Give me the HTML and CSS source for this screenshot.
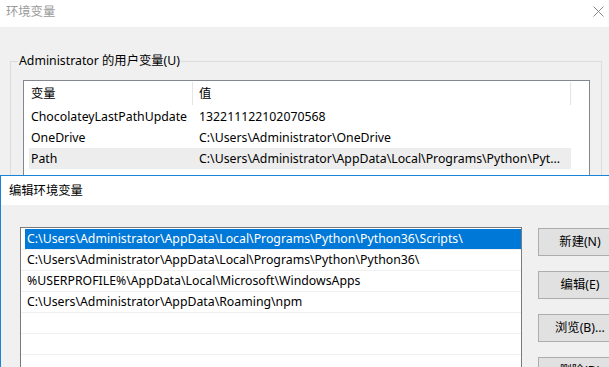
FILE: index.html
```html
<!DOCTYPE html>
<html lang="zh-CN">
<head>
<meta charset="utf-8">
<title>环境变量</title>
<link rel="stylesheet" href="styles.css">
</head>
<body>
<div class="win">
  <div class="titlebar">
    <span class="title">环境变量</span>
    <svg class="close" width="11" height="11" viewBox="0 0 11 11"><path d="M0.5 0.5 L10.5 10.5 M10.5 0.5 L0.5 10.5" stroke="#8a8a8a" stroke-width="1" fill="none"/></svg>
  </div>
  <div class="wbody">
    <div class="group">
      <span class="legend">Administrator 的用户变量(U)</span>
      <div class="list">
        <div class="lrow head">
          <div class="c1">变量</div>
          <div class="c2">值</div>
        </div>
        <div class="lrow">
          <div class="c1">ChocolateyLastPathUpdate</div>
          <div class="c2">132211122102070568</div>
        </div>
        <div class="lrow">
          <div class="c1">OneDrive</div>
          <div class="c2">C:\Users\Administrator\OneDrive</div>
        </div>
        <div class="lrow hl">
          <div class="c1">Path</div>
          <div class="c2">C:\Users\Administrator\AppData\Local\Programs\Python\Pyt...</div>
        </div>
        <div class="lrow"></div>
      </div>
    </div>
  </div>
</div>

<div class="dlg">
  <div class="dtitle">编辑环境变量</div>
  <div class="dbody">
    <div class="elist">
      <div class="erow sel"><div class="txt">C:\Users\Administrator\AppData\Local\Programs\Python\Python36\Scripts\</div></div>
      <div class="erow"><div class="txt">C:\Users\Administrator\AppData\Local\Programs\Python\Python36\</div></div>
      <div class="erow"><div class="txt">%USERPROFILE%\AppData\Local\Microsoft\WindowsApps</div></div>
      <div class="erow"><div class="txt">C:\Users\Administrator\AppData\Roaming\npm</div></div>
      <div class="erow"><div class="txt"></div></div>
      <div class="erow"><div class="txt"></div></div>
      <div class="erow"><div class="txt"></div></div>
    </div>
    <div class="btns">
      <div class="btn">新建(N)</div>
      <div class="btn">编辑(E)</div>
      <div class="btn">浏览(B)...</div>
      <div class="btn">删除(D)</div>
    </div>
  </div>
</div>
</body>
</html>
```
FILE: styles.css
```css
html, body {
  margin: 0;
  padding: 0;
}
body {
  width: 609px;
  height: 367px;
  overflow: hidden;
  position: relative;
  font-family: "Noto Sans", "Noto Sans CJK SC", sans-serif;
  font-size: 12.3px;
  color: #000;
  background: #f0f0f0;
}
.win {
  height: 367px;
  background: #f0f0f0;
}
.titlebar {
  height: 27px;
  background: #fff;
  display: flex;
  align-items: center;
  justify-content: space-between;
  padding: 0 5px 0 6px;
  box-sizing: border-box;
}
.title {
  color: #9a9a9a;
  line-height: 16px;
  margin-top: -3px;
}
.close {
  display: block;
  margin-top: -5px;
}
.wbody {
  padding: 34px 7px 0 10px;
}
.group {
  position: relative;
  border: 1px solid #dcdcdc;
  height: 320px;
  padding: 18px 11px 0 12px;
}
.legend {
  position: absolute;
  top: -9px;
  left: 7px;
  padding: 0 1px;
  background: #f0f0f0;
  line-height: 16px;
}
.list {
  background: #fff;
  border: 1px solid #828790;
  height: 300px;
  overflow: hidden;
}
.lrow {
  display: flex;
  margin-left: 5px;
  width: 542px;
  height: 21px;
  line-height: 21px;
  white-space: nowrap;
}
.lrow.head {
  height: 25px;
  line-height: 23px;
  padding-top: 1px;
  box-sizing: border-box;
}
.lrow.hl {
  background: #ededed;
}
.c1 {
  width: 164px;
  box-sizing: border-box;
  padding-left: 2px;
  overflow: hidden;
}
.c2 {
  width: 378px;
  box-sizing: border-box;
  padding-left: 6px;
  overflow: hidden;
}
.head .c1, .head .c2 {
  border-right: 1px solid #e5e5e5;
  height: 23px;
}
.dlg {
  position: absolute;
  top: 175px;
  left: 0;
  width: 608px;
  height: 191px;
  overflow: hidden;
  border-top: 1px solid #1883d7;
  border-left: 1px solid #1883d7;
  background: #f0f0f0;
}
.dtitle {
  height: 29px;
  line-height: 29px;
  background: #fff;
  padding-left: 8px;
}
.dbody {
  display: flex;
  align-items: flex-start;
  gap: 16px;
  padding: 22px 0 0 19px;
}
.elist {
  flex: none;
  width: 502px;
  height: 200px;
  box-sizing: border-box;
  border: 1px solid #7a7a7a;
  background: #fff;
  padding-top: 1px;
}
.erow {
  height: 21px;
  box-sizing: border-box;
  border-bottom: 1px solid #f0f0f0;
}
.txt {
  margin-left: 4px;
  height: 20px;
  line-height: 20px;
  padding-left: 2px;
  white-space: nowrap;
  overflow: hidden;
}
.erow.sel .txt {
  background: #0078d7;
  color: #fff;
}
.btns {
  flex: none;
  display: flex;
  flex-direction: column;
  gap: 15px;
  padding-top: 1px;
}
.btn {
  width: 84px;
  height: 28px;
  box-sizing: border-box;
  border: 1px solid #adadad;
  background: #e1e1e1;
  text-align: center;
  line-height: 26px;
}
```
